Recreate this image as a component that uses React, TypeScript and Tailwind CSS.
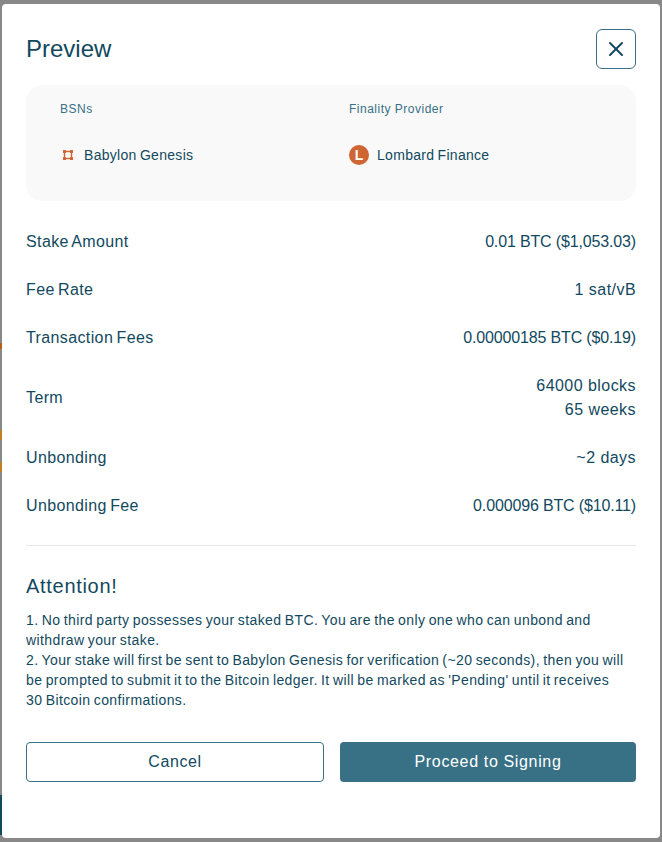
import { X } from "lucide-react";

const rows = [
  { label: "Stake Amount", value: ["0.01 BTC ($1,053.03)"], amount: true },
  { label: "Fee Rate", value: ["1 sat/vB"], amount: false },
  { label: "Transaction Fees", value: ["0.00000185 BTC ($0.19)"], amount: true },
  { label: "Term", value: ["64000 blocks", "65 weeks"], amount: false },
  { label: "Unbonding", value: ["~2 days"], amount: false },
  { label: "Unbonding Fee", value: ["0.000096 BTC ($10.11)"], amount: true },
];

function BabylonIcon() {
  return (
    <svg width="10" height="10" viewBox="0 0 10 10" fill="none" className="ml-[3px] shrink-0">
      <rect x="1.5" y="1.5" width="7" height="7" stroke="#ce6533" strokeWidth="1.4" />
      <rect x="0" y="0" width="3" height="3" rx="0.5" fill="#ce6533" />
      <rect x="7" y="0" width="3" height="3" rx="0.5" fill="#ce6533" />
      <rect x="0" y="7" width="3" height="3" rx="0.5" fill="#ce6533" />
      <rect x="7" y="7" width="3" height="3" rx="0.5" fill="#ce6533" />
    </svg>
  );
}

export default function App() {
  return (
    <div className="relative h-[842px] w-[662px] overflow-hidden bg-[#888888] font-['Liberation_Sans',sans-serif] text-[#12495e]">
      <div className="absolute left-0 top-[343px] h-[6px] w-[2px] bg-[#b5601f]" />
      <div className="absolute left-0 top-[430px] h-[10px] w-[2px] bg-[#c08020]" />
      <div className="absolute left-0 top-[462px] h-[10px] w-[2px] bg-[#c08020]" />
      <div className="absolute left-0 top-[795px] h-[40px] w-[2px] bg-[#12495e]" />

      <div className="absolute left-[2px] top-[4px] flex h-[834px] w-[658px] flex-col rounded-[4px] bg-white px-6 pt-[25px]">
        <div className="flex h-10 items-center justify-between">
          <h2 className="text-2xl font-normal">Preview</h2>
          <button className="flex h-10 w-10 items-center justify-center rounded-[6px] border border-[#387085]">
            <X className="h-6 w-6" strokeWidth={2} />
          </button>
        </div>

        <div className="mt-4 flex h-[116px] rounded-2xl bg-[#f9f9f9] px-[34px] pt-4">
          <div className="w-[289px]">
            <div className="text-xs leading-4 tracking-[0.5px] text-[#387085]">BSNs</div>
            <div className="mt-[26px] flex h-6 items-center">
              <BabylonIcon />
              <span className="ml-[11px] text-sm tracking-[0.3px] [word-spacing:-1px]">Babylon Genesis</span>
            </div>
          </div>
          <div>
            <div className="text-xs leading-4 tracking-[0.5px] text-[#387085]">Finality Provider</div>
            <div className="mt-[26px] flex h-6 items-center">
              <div className="flex h-5 w-5 items-center justify-center rounded-full bg-[#ce6533] text-sm font-bold text-white">L</div>
              <span className="ml-2 text-sm tracking-[0.3px] [word-spacing:-1px]">Lombard Finance</span>
            </div>
          </div>
        </div>

        <div className="mt-[29px] flex flex-col gap-6">
          {rows.map((row) => (
            <div key={row.label} className="flex items-center justify-between text-base leading-6">
              <span className="tracking-[0.38px] [word-spacing:-1.5px]">{row.label}</span>
              <div className={row.amount ? "text-right tracking-[-0.15px]" : "text-right tracking-[0.45px]"}>
                {row.value.map((line) => (
                  <div key={line}>{line}</div>
                ))}
              </div>
            </div>
          ))}
        </div>

        <div className="mt-[27px] h-px bg-[#e5e7e8]" />

        <h3 className="mt-6 text-xl leading-8 tracking-[0.7px]">Attention!</h3>
        <div className="mt-2 text-sm leading-5 tracking-[0.4px] [word-spacing:-1px]">
          <p>1. No third party possesses your staked BTC. You are the only one who can unbond and withdraw your stake.</p>
          <p>
            2. Your stake will first be sent to Babylon Genesis for verification (~20 seconds), then you will be prompted to submit it to the Bitcoin ledger. It will be marked as 'Pending' until it receives
            <br />
            30 Bitcoin confirmations.
          </p>
        </div>

        <div className="mt-8 flex gap-4">
          <button className="h-10 flex-1 rounded-[4px] border border-[#387085] text-base tracking-[0.6px]">Cancel</button>
          <button className="h-10 flex-1 rounded-[4px] bg-[#387085] text-base tracking-[0.65px] text-white">Proceed to Signing</button>
        </div>
      </div>
    </div>
  );
}
